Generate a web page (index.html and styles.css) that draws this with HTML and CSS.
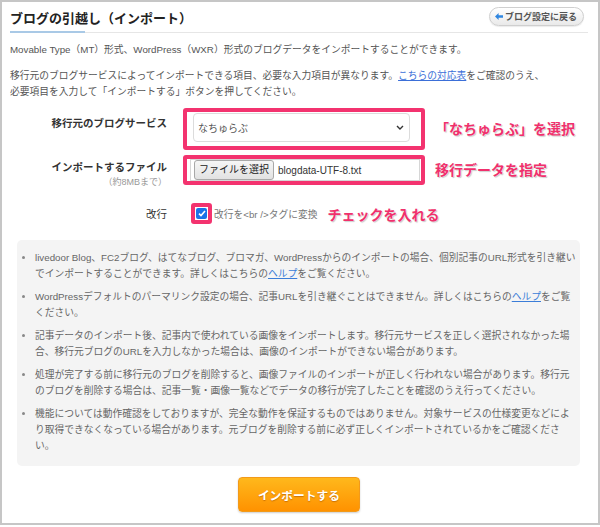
FILE: index.html
```html
<!DOCTYPE html>
<html lang="ja">
<head>
  <meta charset="UTF-8">
  <title>ブログの引越し（インポート）</title>
  <link rel="stylesheet" href="styles.css">
</head>
<body>
  <div class="frame">
    <div class="header">
      <h1 class="page-title">ブログの引越し（インポート）</h1>
      <a class="back-btn" href="#">
        <svg width="8" height="7" viewBox="0 0 8 7"><path d="M0 3.5 L3.6 0 V2.2 H8 V4.8 H3.6 V7 Z" fill="#2f86e0"/></svg>
        ブログ設定に戻る
      </a>
    </div>
    <div class="title-rule"><span class="rule-accent"></span><span class="rule-line"></span></div>

    <p class="intro">Movable Type（MT）形式、WordPress（WXR）形式のブログデータをインポートすることができます。</p>
    <p class="intro">移行元のブログサービスによってインポートできる項目、必要な入力項目が異なります。<a href="#">こちらの対応表</a>をご確認のうえ、<br>必要項目を入力して「インポートする」ボタンを押してください。</p>

    <div class="form">
      <div class="form-row row-service">
        <div class="form-label">移行元のブログサービス</div>
        <div class="mark-box mark-wide">
          <div class="select-box">
            <span>なちゅらぶ</span>
            <svg width="8" height="5" viewBox="0 0 8 5"><path d="M1 1 L4 4 L7 1" fill="none" stroke="#333" stroke-width="1.4"/></svg>
          </div>
        </div>
        <span class="callout">「なちゅらぶ」を選択</span>
      </div>

      <div class="form-row row-file">
        <div class="form-label">インポートするファイル<small>（約8MBまで）</small></div>
        <div class="mark-box mark-wide mark-file">
          <div class="file-box">
            <span class="file-btn">ファイルを選択</span>
            <span class="file-name">blogdata-UTF-8.txt</span>
          </div>
        </div>
        <span class="callout">移行データを指定</span>
      </div>

      <div class="form-row row-check">
        <div class="form-label">改行</div>
        <div class="mark-box mark-check"><span class="checkbox">
          <svg width="8" height="7" viewBox="0 0 8 7"><path d="M1 3.6 L3 5.6 L7 1" fill="none" stroke="#fff" stroke-width="1.6"/></svg>
        </span></div>
        <span class="check-text">改行を&lt;br /&gt;タグに変換</span>
        <span class="callout">チェックを入れる</span>
      </div>
    </div>

    <ul class="notes">
      <li>livedoor Blog、FC2ブログ、はてなブログ、ブロマガ、WordPressからのインポートの場合、個別記事のURL形式を引き継いでインポートすることができます。詳しくはこちらの<a href="#">ヘルプ</a>をご覧ください。</li>
      <li>WordPressデフォルトのパーマリンク設定の場合、記事URLを引き継ぐことはできません。詳しくはこちらの<a href="#">ヘルプ</a>をご覧ください。</li>
      <li>記事データのインポート後、記事内で使われている画像をインポートします。移行元サービスを正しく選択されなかった場合、移行元ブログのURLを入力しなかった場合は、画像のインポートができない場合があります。</li>
      <li>処理が完了する前に移行元のブログを削除すると、画像ファイルのインポートが正しく行われない場合があります。移行元のブログを削除する場合は、記事一覧・画像一覧などでデータの移行が完了したことを確認のうえ行ってください。</li>
      <li>機能については動作確認をしておりますが、完全な動作を保証するものではありません。対象サービスの仕様変更などにより取得できなくなっている場合があります。元ブログを削除する前に必ず正しくインポートされているかをご確認ください。</li>
    </ul>

    <div class="actions">
      <button class="import-btn">インポートする</button>
    </div>
  </div>
</body>
</html>
```

FILE: styles.css
```css
* {
  box-sizing: border-box;
}

body {
  margin: 0;
  font-family: "Liberation Sans", "Noto Sans CJK JP", sans-serif;
  color: #555;
  background: #fff;
  text-autospace: no-autospace;
}

a {
  color: #3b6fd8;
}

.frame {
  width: 600px;
  height: 525px;
  border: 2px solid #c6c6c6;
  padding: 0 10px 0 8px;
}

.header {
  display: flex;
  justify-content: space-between;
  align-items: flex-start;
  height: 29px;
  padding-top: 5px;
}

.page-title {
  margin: 0;
  padding-top: 2px;
  font-size: 13px;
  line-height: 20px;
  font-weight: bold;
  color: #222;
}

.back-btn {
  display: flex;
  align-items: center;
  gap: 2px;
  height: 19px;
  margin-right: 4px;
  padding: 0 6px 0 5px;
  border: 1px solid #cfcfcf;
  border-radius: 10px;
  background: linear-gradient(#ffffff, #e9e9e9);
  box-shadow: 0 1px 1px rgba(0, 0, 0, 0.08);
  color: #555;
  font-size: 9px;
  font-weight: bold;
  text-decoration: none;
}

.title-rule {
  display: flex;
  align-items: flex-end;
  height: 2px;
}

.rule-accent {
  width: 75px;
  height: 2px;
  background: #a9c9e6;
}

.rule-line {
  flex: 1;
  height: 1px;
  background: #e6e6e6;
}

.intro {
  margin: 9px 0 0;
  font-size: 9.75px;
  line-height: 16px;
  color: #555;
}

.intro + .intro {
  margin-top: 10px;
}

.form {
  margin-top: 8px;
}

.form-row {
  display: flex;
  align-items: flex-start;
}

.form-label {
  width: 157px;
  margin-right: 16px;
  text-align: right;
  font-size: 10.5px;
  line-height: 16px;
  font-weight: bold;
  color: #333;
}

.form-label small {
  display: block;
  margin-top: -1px;
  font-size: 9px;
  font-weight: normal;
  color: #999;
}

.mark-box {
  border: 4px solid #f3336f;
  border-radius: 3px;
}

.mark-wide {
  width: 242px;
  padding: 1px 11px 4px 6px;
}

.mark-file {
  padding: 0 1px 0 3px;
}

.select-box {
  display: flex;
  justify-content: space-between;
  align-items: center;
  height: 29px;
  padding: 0 5px 0 4px;
  border: 1px solid #dcdcdc;
  border-radius: 4px;
  background: #fff;
  font-size: 10px;
  color: #555;
}

.file-box {
  display: flex;
  align-items: center;
  gap: 4px;
  height: 22px;
  padding: 0 3px;
  border: 1px solid #d6d6d6;
  background: #fff;
  font-size: 10px;
  color: #333;
}

.file-btn {
  padding: 2px 4px;
  border: 1px solid #a8a8a8;
  border-radius: 3px;
  background: linear-gradient(#f6f6f6, #e2e2e2);
  color: #222;
  line-height: 14px;
}

.callout {
  margin-left: 10px;
  font-size: 14px;
  font-weight: bold;
  color: #f0306c;
  text-shadow: 0 0 2px #fff, 1px 1px 1px rgba(0, 0, 0, 0.25);
}

.row-service {
  height: 42px;
}

.row-service .form-label {
  padding-top: 7px;
}

.row-service .callout {
  margin-top: 10px;
}

.row-file {
  margin-top: 5px;
  height: 30px;
}

.row-file .form-label {
  padding-top: 4px;
}

.row-file .callout {
  margin-top: 4px;
}

.row-check {
  align-items: center;
  margin-top: 18px;
}

.row-check .form-label {
  font-weight: normal;
  color: #333;
}

.mark-check {
  margin-left: 8px;
  padding: 1px;
}

.checkbox {
  display: flex;
  align-items: center;
  justify-content: center;
  width: 11px;
  height: 11px;
  border-radius: 2px;
  background: #1a73e8;
}

.check-text {
  margin-left: 2px;
  font-size: 9.75px;
  color: #777;
}

.notes {
  margin: 16px 8px 0 7px;
  padding: 10px 1.5px 12px 18px;
  border-radius: 5px;
  background: #f4f4f4;
  font-size: 9.75px;
  line-height: 16px;
  color: #666;
}

.notes li {
  margin-bottom: 7px;
}

.notes li:last-child {
  margin-bottom: 0;
}

.notes li::marker {
  color: #888;
}

.notes a {
  color: #3b7dd8;
}

.actions {
  display: flex;
  justify-content: center;
  margin-top: 11px;
}

.import-btn {
  width: 122px;
  height: 35px;
  border: 1px solid #f29a1a;
  border-radius: 4px;
  background: linear-gradient(#ffb81c, #ff9200);
  box-shadow: 0 1px 2px rgba(0, 0, 0, 0.2);
  color: #fff;
  font-family: inherit;
  font-size: 11.75px;
  font-weight: bold;
  text-shadow: 0 1px 1px rgba(150, 70, 0, 0.5);
}
```
